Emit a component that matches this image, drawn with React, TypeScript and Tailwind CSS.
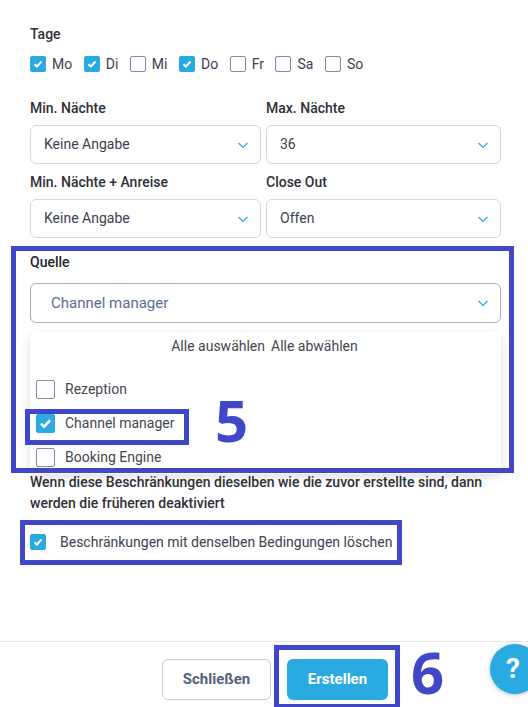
const Chevron = () => (
  <svg width="12" height="12" viewBox="0 0 12 12" fill="none" stroke="#29abe2" strokeWidth="1.2" className="shrink-0">
    <path d="M1.5 4l4.5 4.5L10.500 4" />
  </svg>
);

function Check({ checked, size = "sm" }: { checked?: boolean; size?: "sm" | "lg" }) {
  const box = size === "lg" ? "h-[19px] w-[19px]" : "h-4 w-4";
  const mark = size === "lg" ? 13 : 10;
  return (
    <span
      className={`flex shrink-0 items-center justify-center rounded-[2px] border ${box} ${
        checked ? "border-[#29abe2] bg-[#29abe2]" : "border-[#7f8ba8] bg-white"
      }`}
    >
      {checked && (
        <svg width={mark} height={mark} viewBox="0 0 10 10" fill="none" stroke="#fff" strokeWidth="2">
          <path d="M1.500 5.200l2.400 2.300L8.500 2.500" />
        </svg>
      )}
    </span>
  );
}

function Day({ label, checked }: { label: string; checked?: boolean }) {
  return (
    <span className="flex items-center gap-[6px]">
      <Check checked={checked} />
      <span>{label}</span>
    </span>
  );
}

function Select({ label, value }: { label: string; value: string }) {
  return (
    <div>
      <div className="mb-[7px] h-[20px] text-[14px] leading-[20px] font-medium text-[#2f2f38]">{label}</div>
      <div className="flex h-[39px] items-center justify-between rounded-[6px] border border-[#d3d7e0] pr-[11px] pl-[13px] text-[14px] text-[#3c4150]">
        <span>{value}</span>
        <Chevron />
      </div>
    </div>
  );
}

function Option({ label, checked }: { label: string; checked?: boolean }) {
  return (
    <div className="flex h-[34px] items-center gap-[10px] pl-[6px] text-[14px] text-[#44474f]">
      <Check checked={checked} size="lg" />
      <span>{label}</span>
    </div>
  );
}

export default function App() {
  return (
    <div className="relative h-[707px] w-[528px] overflow-hidden bg-white font-['Roboto',sans-serif]">
      <div className="px-[30px] pt-[24px] pr-[27px]">
        <div className="mb-[11px] h-[20px] text-[14px] leading-[20px] font-medium text-[#2f2f38]">Tage</div>
        <div className="flex h-[18px] items-center gap-[11.5px] text-[14px] text-[#3c4150]">
          <Day label="Mo" checked />
          <Day label="Di" checked />
          <Day label="Mi" />
          <Day label="Do" checked />
          <Day label="Fr" />
          <Day label="Sa" />
          <Day label="So" />
        </div>

        <div className="mt-[25px] grid grid-cols-[231px_235px] gap-x-[5px] gap-y-[8px]">
          <Select label="Min. Nächte" value="Keine Angabe" />
          <Select label="Max. Nächte" value="36" />
          <Select label="Min. Nächte + Anreise" value="Keine Angabe" />
          <Select label="Close Out" value="Offen" />
        </div>

        <div className="mt-[14px] h-[20px] text-[14px] leading-[20px] font-medium text-[#23232b]">Quelle</div>
        <div className="mt-[11px] flex h-[40px] items-center justify-between rounded-[6px] border border-[#a9b2c3] pr-[11px] pl-[20px] text-[15px] text-[#5b6c93]">
          <span>Channel manager</span>
          <Chevron />
        </div>

        <div className="mt-[9px] h-[142px] overflow-hidden rounded-[6px] bg-white shadow-[0_3px_10px_rgba(60,70,100,0.18)]">
          <div className="flex h-[29px] items-center justify-center gap-[6px] pr-[2px] text-[14px] text-[#44474f]">
            <span>Alle auswählen</span>
            <span>Alle abwählen</span>
          </div>
          <div className="pt-[11px]">
            <Option label="Rezeption" />
            <Option label="Channel manager" checked />
            <Option label="Booking Engine" />
          </div>
        </div>

        <p className="mt-[-2px] text-[14px] leading-[21px] font-medium text-[#2f2f38]">
          Wenn diese Beschränkungen dieselben wie die zuvor erstellte sind, dann werden die früheren deaktiviert
        </p>
        <div className="mt-[18px] flex h-[20px] items-center gap-[14px] text-[14px] text-[#3c4150]">
          <Check checked />
          <span>Beschränkungen mit denselben Bedingungen löschen</span>
        </div>
      </div>

      {/* footer */}
      <div className="absolute top-[641px] right-0 left-0 flex justify-start gap-[16px] border-t border-[#e3e5ea] pt-[17px] pl-[162px]">
        <button className="h-[41px] w-[109px] rounded-[6px] border border-[#c5cbd8] bg-white text-[15px] font-bold text-[#55607e]">
          Schließen
        </button>
        <button className="h-[41px] w-[101px] rounded-[6px] bg-[#29abe2] text-[15px] font-bold text-white">
          Erstellen
        </button>
      </div>

      {/* help bubble */}
      <div className="absolute top-[644px] left-[490px] flex h-[50px] w-[50px] items-center rounded-full bg-[#29abe2] pl-[16px] text-[28px] font-bold text-white shadow-[0_1px_4px_rgba(0,0,0,0.25)]">
        ?
      </div>

      {/* tutorial annotations */}
      <div className="absolute top-[246px] left-[11px] h-[227px] w-[503px] border-[5px] border-[#4047c9]" />
      <div className="absolute top-[409px] left-[25px] h-[36px] w-[164px] border-[5px] border-[#4047c9]" />
      <div className="absolute top-[520px] left-[20px] h-[45px] w-[382px] border-[5px] border-[#4047c9]" />
      <div className="absolute top-[645px] left-[274px] h-[64px] w-[126px] border-[5px] border-[#4047c9]" />
      <div className="absolute top-[388px] left-[215px] font-['Open_Sans',sans-serif] text-[58px] leading-[64px] font-bold text-[#4047c9]">
        5
      </div>
      <div className="absolute top-[640px] left-[411px] font-['Open_Sans',sans-serif] text-[58px] leading-[64px] font-bold text-[#4047c9]">
        6
      </div>
    </div>
  );
}
